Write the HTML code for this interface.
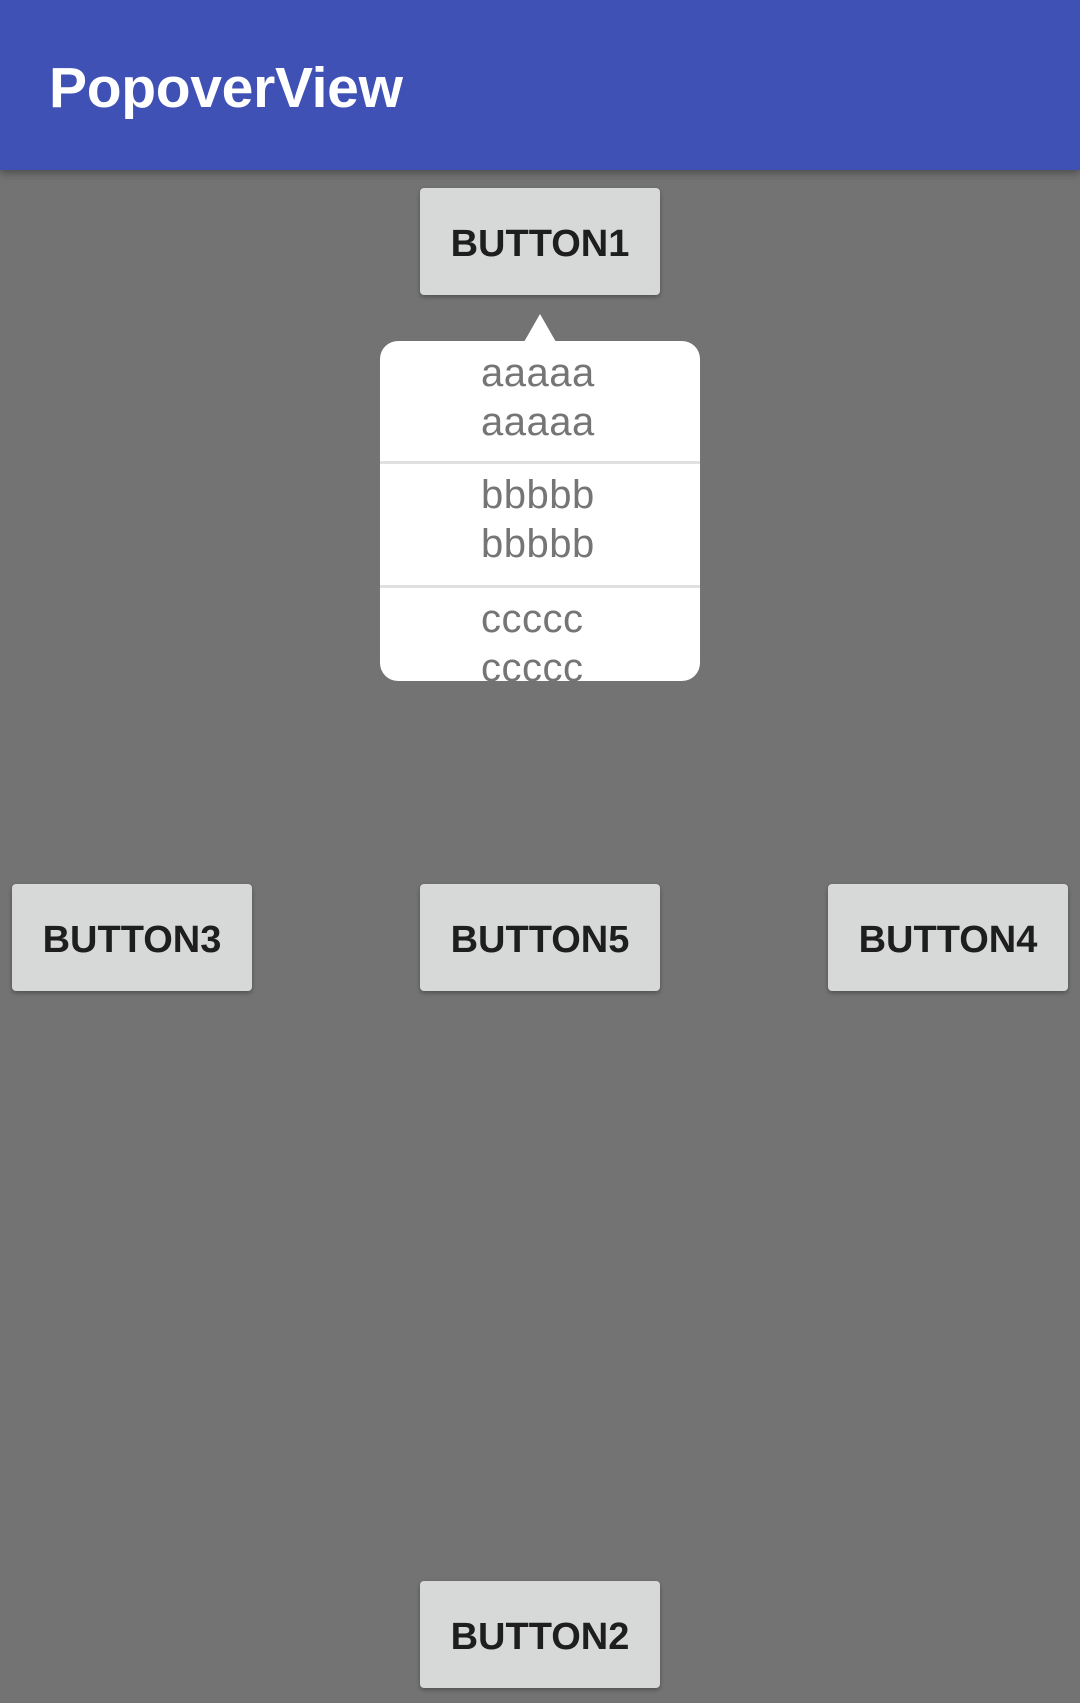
<!DOCTYPE html>
<html><head><meta charset="utf-8"><style>
html,body{margin:0;padding:0}
body{width:1080px;height:1703px;background:#737373;position:relative;overflow:hidden;font-family:"Liberation Sans",sans-serif}
.hdr{position:absolute;left:0;top:0;width:1080px;height:170px;background:#3F51B5;box-shadow:0 3px 8px rgba(0,0,0,.35)}
.hdr span{position:absolute;left:49px;top:55px;font-size:57px;line-height:66px;color:#fff;font-weight:bold;letter-spacing:-0.3px}
.btn{position:absolute;width:240px;height:107px;background:#d7d8d8;border-radius:4px;box-shadow:0 2px 4px rgba(0,0,0,.3);color:#1e1e1e;font-weight:bold;font-size:38px;text-align:center;line-height:113px}
.pop{position:absolute;left:380px;top:341px;width:320px;height:340px;background:#fff;border-radius:18px;overflow:hidden}
.arrow{position:absolute;left:524px;top:314px;width:0;height:0;border-left:16px solid transparent;border-right:16px solid transparent;border-bottom:28px solid #fff}
.t{position:absolute;left:101px;font-size:40px;color:#757575;line-height:49px;letter-spacing:0.5px}
.div{position:absolute;left:0;width:320px;height:3px;background:#e0e0e0}
</style></head><body>
<div class="hdr"><span>PopoverView</span></div>
<div class="btn" style="left:420px;top:188px">BUTTON1</div>
<div class="btn" style="left:12px;top:884px">BUTTON3</div>
<div class="btn" style="left:420px;top:884px">BUTTON5</div>
<div class="btn" style="left:828px;top:884px">BUTTON4</div>
<div class="btn" style="left:420px;top:1581px">BUTTON2</div>
<div class="arrow"></div>
<div class="pop">
<div class="t" style="top:8px">aaaaa<br>aaaaa</div>
<div class="div" style="top:120px"></div>
<div class="t" style="top:130px">bbbbb<br>bbbbb</div>
<div class="div" style="top:244px"></div>
<div class="t" style="top:254px">ccccc<br>ccccc</div>
</div>
</body></html>
